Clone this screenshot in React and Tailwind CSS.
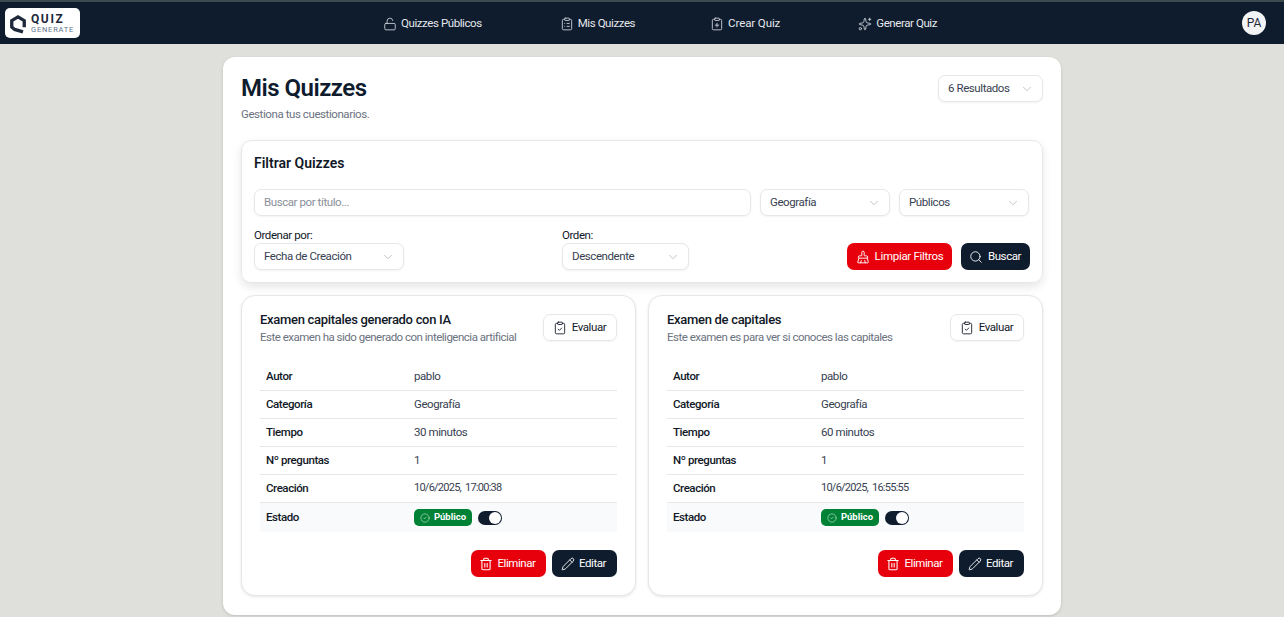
import React from "react";
import { ChevronDown, LockOpen, ClipboardList, ClipboardPlus, Sparkles, Search, ClipboardCheck, Trash2, Pencil, CircleCheck, BrushCleaning } from "lucide-react";

const Select = ({ label, className }) => (
  <div className={`h-[27px] bg-white border border-[#e5e7eb] rounded-[7px] shadow-[0_1px_2px_rgba(0,0,0,0.05)] flex items-center justify-between pl-[9px] pr-[8px] text-[11.5px] text-[#374151] whitespace-nowrap ${className}`}>
    <span>{label}</span>
    <ChevronDown className="w-[14px] h-[14px] text-[#b8bcc4]" strokeWidth={1.5} />
  </div>
);

const NavLink = ({ icon: Icon, label, className }) => (
  <div className={`flex items-center gap-[4px] text-[11.5px] text-[#e5e7eb] whitespace-nowrap ${className}`}>
    <Icon className="w-[14px] h-[14px] text-[#d1d5db]" strokeWidth={1.5} />
    <span>{label}</span>
  </div>
);

const Row = ({ k, v, date }) => (
  <div className="h-[28px] flex items-center border-b border-[#e5e7eb] text-[11.5px]">
    <div className="w-[154px] pl-[6px] font-medium text-[#111827]">{k}</div>
    <div className={date ? "text-[#374151] text-[11px] tracking-[-0.75px] [word-spacing:2px]" : "text-[#374151]"}>{v}</div>
  </div>
);

const Card = ({ title, desc, time, date }) => (
  <div className="min-w-0 h-[301px] bg-white border border-[#e5e7eb] rounded-[14px] shadow-[0_1px_3px_rgba(0,0,0,0.1)] px-[18px] pt-[16px]">
    <div className="flex justify-between h-[45px]">
      <div>
        <div className="text-[13px] leading-[15px] font-medium text-[#111827] tracking-[-0.3px]">{title}</div>
        <div className="text-[11.5px] leading-[16px] mt-[2px] text-[#6b7280] whitespace-nowrap tracking-[-0.5px]">{desc}</div>
      </div>
      <div className="h-[27px] w-[74px] mt-[2px] pr-[1px] border border-[#e5e7eb] rounded-[7px] shadow-[0_1px_2px_rgba(0,0,0,0.05)] flex items-center justify-center gap-[5px] text-[11.5px] text-[#111827]">
        <ClipboardCheck className="w-[14px] h-[14px]" strokeWidth={1.5} />
        <span>Evaluar</span>
      </div>
    </div>
    <div className="mt-[6px]">
      <Row k="Autor" v="pablo" />
      <Row k="Categoría" v="Geografía" />
      <Row k="Tiempo" v={time} />
      <Row k="Nº preguntas" v="1" />
      <Row k="Creación" v={date} date />
      <div className="h-[29px] flex items-center bg-[#f9fafb] text-[11.5px]">
        <div className="w-[154px] pl-[6px] font-medium text-[#111827]">Estado</div>
        <div className="flex items-center gap-[6px]">
          <div className="h-[17px] w-[58px] rounded-[5px] bg-[#008236] text-white flex items-center justify-center gap-[4px] text-[9.5px] font-bold tracking-[0px]">
            <CircleCheck className="w-[10px] h-[10px] opacity-80" strokeWidth={1.5} />
            <span>Público</span>
          </div>
          <div className="w-[24px] h-[14px] rounded-full bg-[#0f1c2e] flex items-center justify-end pr-[1px]">
            <div className="w-[12px] h-[12px] rounded-full bg-white"></div>
          </div>
        </div>
      </div>
    </div>
    <div className="flex justify-end gap-[6px] mt-[18px]">
      <div className="h-[27px] w-[75px] pr-[2px] rounded-[7px] bg-[#e7000b] text-white flex items-center justify-center gap-[4px] text-[11.5px]">
        <Trash2 className="w-[14px] h-[14px]" strokeWidth={1.8} />
        <span>Eliminar</span>
      </div>
      <div className="h-[27px] w-[65px] pr-[2px] rounded-[7px] bg-[#0f1c2e] text-white flex items-center justify-center gap-[4px] text-[11.5px]">
        <Pencil className="w-[14px] h-[14px]" strokeWidth={1.5} />
        <span>Editar</span>
      </div>
    </div>
  </div>
);

export default function App() {
  return (
    <div className="h-[617px] overflow-hidden bg-[#dfe0db] font-['Roboto',sans-serif] tracking-[-0.42px]">
      <header className="h-[44px] bg-[#0f1c2e] border-t-2 border-[#3c4a4d] relative flex items-center justify-center">
        <div className="absolute left-[5px] top-[6px] w-[75px] h-[30px] bg-white rounded-[5px] flex items-center pl-[3px] gap-[3px]">
          <svg viewBox="0 0 24 24" className="w-[20px] h-[20px] mt-[1px]" fill="none" stroke="#1e293b" strokeWidth="4">
            <path d="M18 21.5 L8 18.5 L4.5 15.5 V8 L12 3.5 L19.5 8 V16" />
          </svg>
          <div className="flex flex-col mt-[1px]">
            <span className="text-[12px] leading-[11px] font-bold tracking-[1.6px] text-[#1e293b]">QUIZ</span>
            <span className="text-[7.5px] leading-[9px] tracking-[0.8px] text-[#64748b]">GENERATE</span>
          </div>
        </div>
        <div className="flex items-center gap-[78px] ml-[36px] pt-[1px]">
          <NavLink icon={LockOpen} label="Quizzes Públicos" />
          <NavLink icon={ClipboardList} label="Mis Quizzes" />
          <NavLink icon={ClipboardPlus} label="Crear Quiz" className="ml-[-3px] tracking-[-0.1px]" />
          <NavLink icon={Sparkles} label="Generar Quiz" />
        </div>
        <div className="absolute right-[18px] top-[9px] w-[24px] h-[24px] rounded-full bg-[#f3f4f6] flex items-center justify-center text-[12px] text-[#1f2937] tracking-[0px]">PA</div>
      </header>
      <main className="w-[838px] mx-auto mt-[13px] bg-white rounded-[12px] shadow-[0_1px_3px_rgba(0,0,0,0.15)] px-[18px] pt-[17px] h-[558px]">
        <div className="flex justify-between h-[66px]">
          <div>
            <h1 className="text-[24px] leading-[28px] font-semibold text-[#0f1c2e] tracking-[-0.5px]">Mis Quizzes</h1>
            <p className="text-[11.5px] leading-[16px] mt-[4px] text-[#6b7280]">Gestiona tus cuestionarios.</p>
          </div>
          <Select label="6 Resultados" className="w-[105px] mt-[1px]" />
        </div>
        <section className="h-[143px] border border-[#e5e7eb] rounded-[10px] shadow-[0_4px_10px_rgba(0,0,0,0.1)] px-[12px] pt-[13px]">
          <h2 className="text-[14px] leading-[18px] font-semibold text-[#111827] tracking-[0px]">Filtrar Quizzes</h2>
          <div className="flex gap-[9px] mt-[17px] pr-[1px]">
            <div className="flex-1 h-[27px] border border-[#e5e7eb] rounded-[7px] flex items-center pl-[9px] text-[11.5px] text-[#8a8f98] shadow-[0_1px_2px_rgba(0,0,0,0.05)]">Buscar por título...</div>
            <Select label="Geografía" className="w-[130px]" />
            <Select label="Públicos" className="w-[130px]" />
          </div>
          <div className="flex items-end mt-[11px]">
            <div className="w-[308px]">
              <label className="block text-[11.5px] leading-[16px] text-[#111827]">Ordenar por:</label>
              <Select label="Fecha de Creación" className="w-[150px]" />
            </div>
            <div>
              <label className="block text-[11.5px] leading-[16px] text-[#111827]">Orden:</label>
              <Select label="Descendente" className="w-[127px]" />
            </div>
            <div className="ml-auto flex gap-[9px]">
              <div className="h-[27px] w-[105px] rounded-[7px] bg-[#e7000b] text-white flex items-center justify-center gap-[5px] text-[11.5px] tracking-[-0.3px]">
                <BrushCleaning className="w-[14px] h-[14px]" strokeWidth={1.6} />
                <span>Limpiar Filtros</span>
              </div>
              <div className="h-[27px] w-[69px] pr-[1px] rounded-[7px] bg-[#0f1c2e] text-white flex items-center justify-center gap-[5px] text-[11.5px]">
                <Search className="w-[14px] h-[14px]" strokeWidth={1.5} />
                <span>Buscar</span>
              </div>
            </div>
          </div>
        </section>
        <div className="grid grid-cols-2 gap-[12px] mt-[12px]">
          <Card title="Examen capitales generado con IA" desc="Este examen ha sido generado con inteligencia artificial" time="30 minutos" date="10/6/2025, 17:00:38" />
          <Card title="Examen de capitales" desc="Este examen es para ver si conoces las capitales" time="60 minutos" date="10/6/2025, 16:55:55" />
        </div>
      </main>
    </div>
  );
}
